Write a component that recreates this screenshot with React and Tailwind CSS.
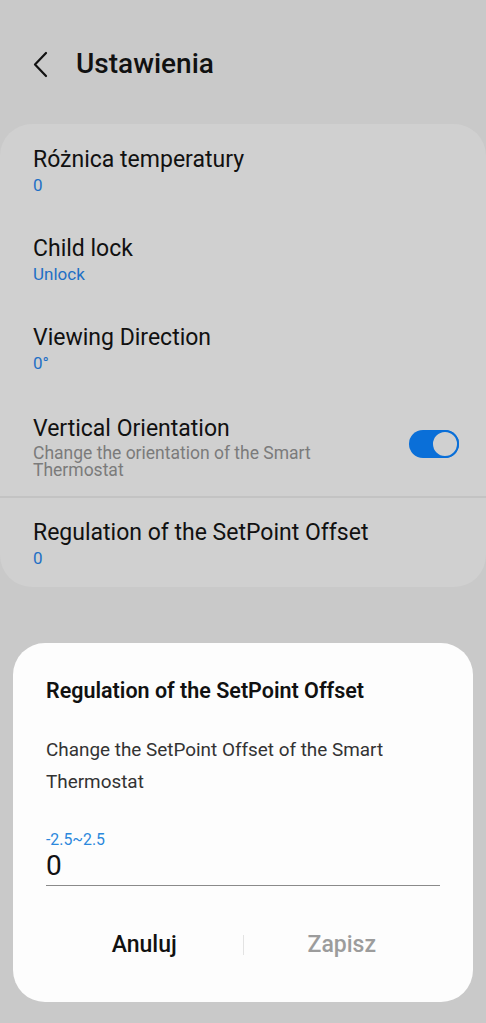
import React, {useState} from 'react'

const font = {fontFamily: 'Roboto, "Noto Sans", sans-serif'}

const SettingRow = ({title, value}) => (
  <div className="px-[33px] h-[89px] flex flex-col justify-center pt-[4px]">
    <div className="text-[23px] leading-[28px] text-[#111]">{title}</div>
    <div className="text-[17px] leading-[22px] text-[#1f6fc5]">{value}</div>
  </div>
)

const App = () => {
  const [offset, setOffset] = useState("0");

  return (
    <div style={font} className="w-[486px] h-[1023px] bg-[#c9c9c9] overflow-hidden flex flex-col">
      <div className="h-[124px] flex items-start pt-[44px] pl-[30px]">
        <svg width="22" height="40" viewBox="0 0 22 40">
          <path d="M16 9 L5 20.5 L16 32" fill="none" stroke="#111" strokeWidth="2.2" strokeLinecap="round" strokeLinejoin="round"/>
        </svg>
        <span className="ml-[24px] text-[28px] leading-[40px] font-medium text-[#111]">Ustawienia</span>
      </div>

      <div className="bg-[#d0d0d0] rounded-[32px]">
        <SettingRow title="Różnica temperatury" value="0"/>
        <SettingRow title="Child lock" value="Unlock"/>
        <SettingRow title="Viewing Direction" value="0°"/>
        <div className="h-[105px] pl-[33px] pr-[27px] flex items-center justify-between pt-[6px]">
          <div className="flex flex-col">
            <div className="text-[23px] leading-[28px] text-[#111]">Vertical Orientation</div>
            <div className="text-[17.5px] leading-[17px] text-[#7b7b7b] w-[320px] mt-[2px]">Change the orientation of the Smart Thermostat</div>
          </div>
          <div className="relative w-[50px] h-[28px] rounded-full bg-[#0a6fd8] -mt-[6px]">
            <div className="absolute right-0 top-0 w-[28px] h-[28px] rounded-full bg-[#d0d0d0] border-[2px] border-[#0a6fd8]"/>
          </div>
        </div>
        <div className="h-[2px] bg-[#c3c3c3]"/>
        <div className="px-[33px] h-[89px] flex flex-col justify-center pt-[3px]">
          <div className="text-[23px] leading-[28px] text-[#111]">Regulation of the SetPoint Offset</div>
          <div className="text-[17px] leading-[22px] text-[#1f6fc5]">0</div>
        </div>
      </div>

      <div className="mt-[56px] mx-[13px] bg-[#fdfdfd] rounded-[32px] h-[359px] px-[33px] pt-[34px]">
        <div className="text-[21.5px] leading-[28px] font-semibold text-[#111]">Regulation of the SetPoint Offset</div>
        <div className="mt-[29px] text-[18.9px] leading-[32px] text-[#333]">Change the SetPoint Offset of the Smart Thermostat</div>
        <div className="mt-[33px] text-[15.8px] leading-[18px] text-[#2b88dc]">-2.5~2.5</div>
        <input
          value={offset}
          onChange={(e) => setOffset(e.target.value)}
          className="w-full h-[37px] text-[28px] leading-[32px] text-[#111] bg-transparent outline-none border-b border-[#8a8a8a] pb-[3px]"
          style={font}
        />
        <div className="mt-[44px] flex items-center">
          <button className="flex-1 text-[23px] leading-[30px] font-medium text-[#111] text-center">Anuluj</button>
          <div className="w-px h-[20px] bg-[#e3e3e3]"/>
          <button className="flex-1 text-[23px] leading-[30px] font-medium text-[#9c9c9c] text-center">Zapisz</button>
        </div>
      </div>
    </div>
  )
}

export default App
